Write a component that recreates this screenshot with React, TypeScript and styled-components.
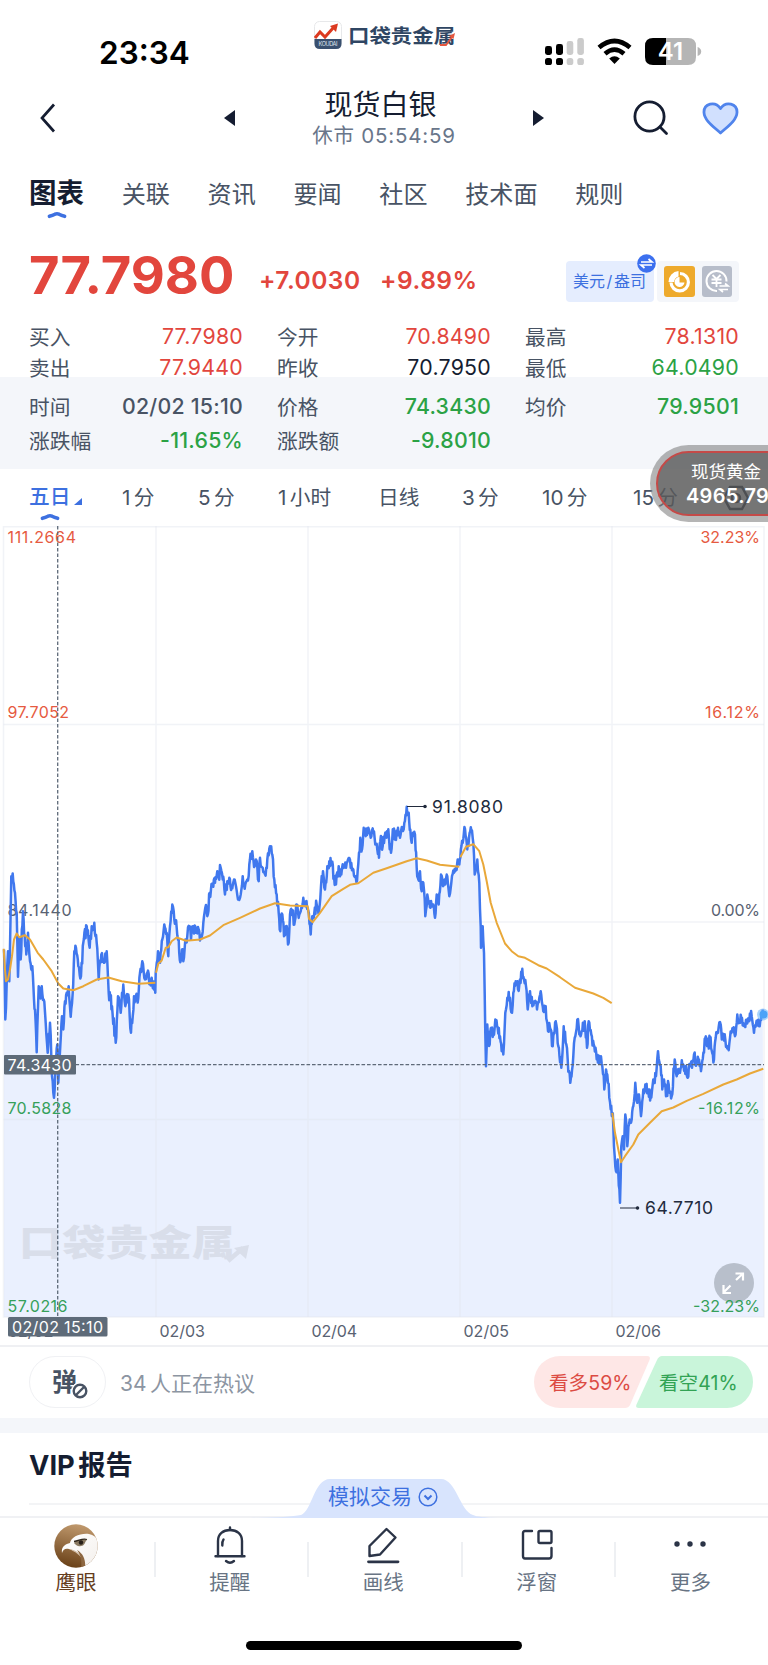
import React from 'react';
import styled, { createGlobalStyle } from 'styled-components';

const GlobalStyle = createGlobalStyle`
  * { box-sizing: border-box; }
  body {
    margin: 0;
    background: #fff;
    font-family: Inter, "Noto Sans CJK SC", sans-serif;
    color: #151d31;
  }
  svg { display: block; flex: none; }
`;

const RED = '#e2463d';
const GREEN = '#2ba245';
const BLUE = '#3d70e0';
const INK = '#151d31';
const SLATE = '#485364';

const Screen = styled.div`
  position: relative;
  width: 768px;
  height: 1665px;
  overflow: hidden;
  background: #fff;
  white-space: nowrap;
`;

/* ---------- status bar ---------- */

const StatusBar = styled.div`
  display: grid;
  grid-template-columns: 314px 1fr 223px;
  height: 82px;
`;

const Clock = styled.div`
  padding: 33px 0 0 99px;
  font-size: 31.5px;
  line-height: 39px;
  font-weight: 600;
  color: #000;
`;

const Brand = styled.div`
  padding-top: 20px;
`;

const StatusIcons = styled.div`
  display: flex;
  gap: 13px;
  padding-top: 38px;
`;

/* ---------- title bar ---------- */

const TitleBar = styled.div`
  display: flex;
  align-items: center;
  height: 80px;
  padding: 0 29px 8px 40px;
`;

const TitleBlock = styled.div`
  width: 298px;
  text-align: center;
`;

const Title = styled.div`
  padding-right: 7px;
  font-size: 28px;
  line-height: 35px;
`;

const SubTitle = styled.div`
  font-size: 20.5px;
  line-height: 25px;
  letter-spacing: 0.8px;
  color: #69768a;
`;

const Spacer = styled.div<{ w: number }>`
  flex: none;
  width: ${(p) => p.w}px;
`;

/* ---------- tabs ---------- */

const Tabs = styled.div`
  display: flex;
  gap: 37.7px;
  height: 66px;
  padding: 14px 0 0 29px;
`;

const Tab = styled.div<{ active?: boolean }>`
  display: flex;
  flex-direction: column;
  align-items: center;
  gap: 1px;
  font-size: ${(p) => (p.active ? 27.5 : 24.1)}px;
  line-height: ${(p) => (p.active ? 34 : 38)}px;
  font-weight: ${(p) => (p.active ? 700 : 400)};
  color: ${(p) => (p.active ? INK : SLATE)};
`;

/* ---------- price ---------- */

const PriceRow = styled.div`
  display: flex;
  align-items: flex-start;
  height: 90px;
  padding: 0 29px;
`;

const Price = styled.div`
  width: 230px;
  padding-top: 16px;
  font-size: 52.5px;
  line-height: 62px;
  font-weight: 700;
  color: ${RED};
`;

const Change = styled.div<{ w: number }>`
  width: ${(p) => p.w}px;
  padding-top: 37px;
  font-size: 24.5px;
  line-height: 30px;
  font-weight: 600;
  letter-spacing: 0.5px;
  color: ${RED};
`;

const Unit = styled.div`
  position: relative;
  width: 88px;
  height: 41px;
  margin: 33px 3px 0 auto;
  padding-left: 7px;
  border-radius: 4px;
  background: #e5edfe;
  font-size: 16px;
  line-height: 41px;
  word-spacing: -2.9px;
  color: ${BLUE};
`;

const UnitBadge = styled.div`
  position: absolute;
  right: -2px;
  top: -7px;
`;

const Markers = styled.div`
  display: flex;
  gap: 7px;
  height: 41px;
  margin-top: 33px;
  padding: 5px 7px;
  border-radius: 4px;
  background: #f4f6fa;
`;

const QuoteGrid = styled.div<{ tinted?: boolean }>`
  display: grid;
  grid-template-columns: repeat(3, 213px);
  column-gap: 35px;
  grid-auto-rows: ${(p) => (p.tinted ? 34 : 30.5)}px;
  height: ${(p) => (p.tinted ? 92 : 59)}px;
  padding: ${(p) => (p.tinted ? '12px' : '3px')} 29px 0;
  background: ${(p) => (p.tinted ? '#f4f6fa' : 'transparent')};
`;

const Quote = styled.div`
  display: flex;
  justify-content: space-between;
  align-items: center;
  font-size: 20.7px;
  color: ${SLATE};
`;

const Value = styled.span<{ color?: string; strong?: boolean }>`
  margin-right: -1px;
  font-size: 21.3px;
  letter-spacing: 0.25px;
  font-weight: ${(p) => (p.strong ? 500 : 400)};
  color: ${(p) => p.color || SLATE};
`;

/* ---------- periods ---------- */

const Periods = styled.div`
  display: flex;
  height: 57px;
  padding: 13px 0 0 29px;
`;

const Period = styled.div<{ w: number; active?: boolean }>`
  flex: none;
  width: ${(p) => p.w}px;
  font-size: 20.7px;
  line-height: 32px;
  word-spacing: -2.5px;
  font-weight: ${(p) => (p.active ? 500 : 400)};
  color: ${(p) => (p.active ? BLUE : SLATE)};
`;

const PeriodLabel = styled.div`
  display: flex;
  align-items: flex-end;
  height: 31px;
  gap: 4px;
`;

const PeriodMark = styled.div`
  padding: 0 0 0 11px;
`;

const FloatQuote = styled.div`
  position: absolute;
  left: 650px;
  top: 445px;
  width: 160px;
  height: 77px;
  padding: 6px;
  border-radius: 39px;
  background: rgba(128, 128, 128, 0.58);
`;

const FloatInner = styled.div`
  height: 65px;
  padding: 9px 0 0 28px;
  border: 2px solid #c44a48;
  border-radius: 33px;
  background: rgba(75, 75, 75, 0.6);
  color: #fff;
`;

const FloatName = styled.div`
  padding-left: 5px;
  font-size: 17.5px;
  line-height: 20px;
`;

const FloatPrice = styled.div`
  font-size: 20px;
  line-height: 28px;
  font-weight: 600;
  letter-spacing: 0.3px;
`;

/* ---------- comments ---------- */

const CommentBar = styled.div`
  display: flex;
  align-items: center;
  height: 73px;
  padding: 0 15px 2px 29px;
  border-top: 2px solid #eff0f3;
`;

const DanmuButton = styled.div`
  position: relative;
  display: flex;
  align-items: center;
  width: 77px;
  height: 52px;
  padding: 0 0 4px 22px;
  border: 1.5px solid #f0f1f4;
  border-radius: 26px;
  font-size: 25px;
  font-weight: 700;
  color: ${SLATE};
`;

const DanmuOff = styled.div`
  position: absolute;
  left: 41px;
  top: 25px;
  border: 1px solid #fff;
  border-radius: 50%;
  background: #fff;
`;

const CommentText = styled.div`
  flex: 1;
  padding-left: 14px;
  font-size: 21px;
  word-spacing: -2.5px;
  color: #8c95a2;
`;

const Votes = styled.div`
  display: grid;
  grid-template-columns: 110px 109px;
  align-items: center;
  width: 219px;
  height: 52px;
`;

const VoteBg = styled.svg`
  grid-area: 1 / 1 / 2 / 3;
`;

const Vote = styled.div<{ col: number; color: string }>`
  grid-area: 1 / ${(p) => p.col} / 2 / ${(p) => p.col + 1};
  padding-left: 15px;
  font-size: 19.5px;
  letter-spacing: 0.1px;
  color: ${(p) => p.color};
`;

const Band = styled.div`
  height: 15px;
  background: #f4f6fa;
`;

const ReportBar = styled.div`
  display: flex;
  flex-direction: column;
  height: 83px;
`;

const ReportTitle = styled.div`
  padding: 14px 0 0 29px;
  height: 45px;
  font-size: 27.3px;
  line-height: 38px;
  font-weight: 700;
  word-spacing: -3px;
`;

const ReportRule = styled.div`
  position: relative;
  height: 26px;
  margin: 25px 0 0 29px;
  border-top: 2px solid #f3f4f6;
`;

const TradeTab = styled.div`
  position: absolute;
  left: 221px;
  top: -27px;
`;

const TradeLabel = styled.div`
  position: absolute;
  left: 78px;
  top: 1px;
  display: flex;
  align-items: center;
  gap: 6px;
  font-size: 21px;
  line-height: 36px;
  color: ${BLUE};
`;

const BottomNav = styled.div`
  display: grid;
  grid-template-columns: repeat(5, 153.6px);
  height: 125px;
  padding-top: 6px;
  border-top: 2px solid #f0f1f4;
`;

const NavItem = styled.div<{ accent?: boolean }>`
  position: relative;
  display: flex;
  flex-direction: column;
  align-items: center;
  padding-right: 1.5px;
  font-size: 20.5px;
  line-height: 30px;
  color: ${(p) => (p.accent ? '#653d1d' : '#687484')};

  & + & {
    background: linear-gradient(#eef0f3, #eef0f3) 0 18px / 2px 35px no-repeat;
  }
`;

const NavIcon = styled.div`
  height: 44px;
`;

const HomeBar = styled.div`
  width: 276px;
  height: 9px;
  margin: 0 auto;
  border-radius: 5px;
  background: #000;
`;

/* ---------- chart data ---------- */

type Pt = [number, number];

// Flat x,y list in thirds of a pixel, measured from a given left edge.
const trace = (left: number, flat: number[]): Pt[] => {
  const out: Pt[] = [];
  for (let i = 0; i < flat.length; i += 2) {
    out.push([left + flat[i] / 3, 253.5 + flat[i + 1] / 3]);
  }
  return out;
};

const PRICES: Pt[] = [
  ...trace(0, [
    12, 510, 16, 720, 24, 515, 28, 605, 34, 290, 38, 282, 45, 340, 50, 400, 54, 592, 58, 475, 62, 540,
    69, 395, 74, 470, 79, 525, 84, 460, 90, 545, 97, 560, 102, 660, 105, 690, 110, 818, 116, 620, 120, 650,
    125, 620, 131, 660, 137, 730, 143, 820, 150, 730, 156, 890, 162, 955, 166, 870, 172, 795, 175, 910,
    181, 800, 186, 710, 190, 750, 195, 665, 200, 640, 206, 620, 212, 712, 218, 640, 223, 515, 228, 505,
    235, 560, 243, 590, 250, 490, 260, 440, 269, 505, 275, 440, 283, 430, 290, 490, 296, 600, 304, 525,
    312, 550, 320, 515, 326, 640, 336, 680, 347, 790, 354, 650, 362, 700, 370, 615, 376, 680, 385, 645,
    393, 760, 402, 650, 415, 655, 420, 580, 427, 545, 435, 600, 442, 580, 450, 600, 455, 595, 466, 640,
    467, 580, 474, 515, 480, 550, 487, 480, 493, 435, 500, 460, 505, 530, 510, 440, 517, 375, 523, 420,
    530, 445, 536, 480, 541, 548, 546, 510, 550, 545, 556, 480, 562, 470, 568, 445, 573, 480, 580, 440,
    588, 460, 596, 450, 604, 478, 610, 430, 616, 385, 622, 410, 629, 340, 638, 320, 645, 310, 652, 275,
    656, 290, 662, 265, 668, 300, 675, 345, 682, 305, 688, 295, 695, 320, 702, 300, 708, 320, 714, 360,
    722, 345, 728, 290, 736, 315, 742, 300, 748, 255, 757, 215, 764, 255, 768, 240, 776, 305,
  ]),
  ...trace(240, [
    60, 235, 68, 265, 75, 285, 82, 240, 90, 200, 97, 225, 103, 300, 110, 345, 116, 400, 119, 450, 127, 405,
    132, 470, 138, 440, 146, 490, 150, 405, 157, 400, 163, 435, 170, 375, 178, 405, 184, 385, 190, 355,
    196, 380, 203, 385, 205, 395, 212, 465, 217, 410, 223, 400, 230, 375, 237, 395, 243, 320, 249, 275,
    255, 330, 262, 260, 268, 245, 275, 250, 282, 290, 288, 315, 296, 260, 304, 285, 312, 260, 318, 265,
    324, 240, 332, 265, 340, 270, 346, 290, 351, 305, 357, 220, 361, 175, 366, 210, 371, 145, 377, 170,
    385, 145, 392, 175, 400, 160, 406, 195, 412, 210, 417, 235, 421, 185, 428, 200, 434, 170, 441, 155,
    447, 175, 453, 220, 460, 150, 466, 180, 474, 145, 480, 175, 487, 145, 493, 130, 500, 82, 506, 100,
    511, 150, 515, 190, 519, 160, 525, 165, 530, 265, 535, 300, 540, 275, 545, 335, 550, 310, 556, 410,
    562, 345, 568, 365, 575, 380, 580, 375, 585, 415, 590, 345, 596, 375, 603, 285, 609, 320, 614, 300,
    622, 290, 628, 350, 634, 310, 642, 280, 648, 265, 653, 240, 658, 255, 661, 235, 668, 190, 675, 148,
    682, 210, 687, 175, 694, 152, 700, 190, 704, 285, 712, 240, 718, 310, 722, 440, 723, 505, 728, 440,
    732, 520, 738, 860,
  ]),
  ...trace(450, [
    112, 735, 119, 795, 124, 745, 130, 765, 136, 720, 143, 745, 150, 770, 160, 825, 166, 700, 172, 655,
    180, 655, 186, 700, 190, 640, 197, 605, 204, 630, 210, 600, 217, 568, 222, 600, 228, 620, 233, 690,
    240, 635, 247, 680, 254, 665, 261, 690, 272, 635, 278, 680, 287, 680, 294, 755, 300, 745, 308, 800,
    317, 725, 325, 800, 334, 865, 341, 740, 347, 790, 353, 840, 361, 910, 370, 830, 376, 770, 382, 720,
    388, 765, 395, 755, 404, 725, 411, 805, 416, 725, 424, 765, 433, 800, 440, 840, 449, 830, 457, 860,
    463, 930, 468, 870, 474, 910, 482, 990, 487, 1000, 490, 1040, 494, 1130, 498, 1175, 503, 1140,
    510, 1270, 514, 1100, 518, 1070, 522, 1110, 526, 1005, 532, 1100, 537, 1035, 545, 1020, 550, 980,
    556, 910, 562, 970, 567, 945, 573, 1010, 580, 930, 588, 915, 595, 930, 602, 950, 610, 900, 618, 890,
    624, 815, 632, 860, 637, 930, 642, 900, 648, 950, 656, 915, 665, 950, 674, 840, 680, 890, 690, 880,
    697, 855, 704, 865, 713, 895, 720, 860, 726, 865, 732, 825, 740, 850, 747, 840, 753, 875, 762, 820,
    766, 775, 773, 800, 780, 780, 792, 840, 797, 775, 804, 760, 812, 735, 817, 775, 826, 780, 834, 805,
    840, 775, 849, 750, 855, 770, 862, 705, 870, 730, 876, 715, 884, 735, 890, 720, 898, 725, 905, 710,
    912, 760, 918, 735, 927, 740, 935, 700, 938, 690,
  ]),
];

const AVERAGES: Pt[][] = [
  trace(0, [
    11, 508, 14, 560, 18, 605, 24, 600, 30, 570, 36, 530, 42, 480, 50, 462, 58, 473, 75, 467, 90, 480,
    113, 520, 130, 540, 155, 575, 175, 612, 190, 627, 220, 632, 250, 620, 290, 600, 325, 594, 365, 605,
    415, 613, 466, 610,
  ]),
  trace(0, [
    468, 580, 475, 553, 485, 543, 497, 505, 505, 503, 515, 485, 530, 474, 558, 484, 600, 480, 630, 468,
    670, 437, 720, 415, 780, 387, 825, 371, 870, 378, 923, 380, 927, 418, 938, 428, 960, 400, 995, 350,
    1030, 328, 1050, 316, 1075, 311, 1120, 280, 1160, 266, 1220, 245, 1250, 236, 1280, 243, 1320, 256,
    1378, 262,
  ]),
  trace(450, [
    31, 233, 48, 202, 70, 194, 88, 215, 100, 255, 110, 305, 122, 370, 140, 430, 165, 492, 185, 515,
    205, 530, 225, 535, 265, 557, 290, 567, 330, 593, 375, 625, 430, 642, 460, 655, 485, 671,
  ]),
  trace(450, [
    487, 1000, 495, 1060, 505, 1110, 513, 1148, 525, 1130, 550, 1095, 565, 1065, 600, 1030, 635, 995,
    670, 984, 710, 964, 760, 943, 820, 915, 860, 900, 900, 882, 940, 868,
  ]),
];

const withTicks = (pts: Pt[]): Pt[] => {
  const out: Pt[] = [pts[0]];
  let seed = 7;
  for (let i = 1; i < pts.length; i++) {
    const [x0, y0] = pts[i - 1];
    const [x1, y1] = pts[i];
    const n = Math.max(1, Math.round((x1 - x0) / 0.6));
    for (let k = 1; k < n; k++) {
      seed = (seed * 16807) % 2147483647;
      const wobble = (seed / 2147483647 - 0.5) * 13;
      out.push([x0 + ((x1 - x0) * k) / n, y0 + ((y1 - y0) * k) / n + wobble]);
    }
    out.push([x1, y1]);
  }
  return out;
};

const toPath = (pts: Pt[]) => 'M' + pts.map(([x, y]) => `${x.toFixed(1)} ${y.toFixed(1)}`).join('L');

const pricePath = toPath(withTicks(PRICES));

// label, baseline, colour, drawn width
const LEFT_AXIS: [string, number, string, number][] = [
  ['111.2664', 17, '#e65a41', 68.5],
  ['97.7052', 192, '#e65a41', 61.5],
  ['84.1440', 390, '#596272', 64],
  ['70.5828', 587.5, '#36a05a', 64],
  ['57.0216', 785.5, '#36a05a', 60],
];

const RIGHT_AXIS: [string, number, string, number][] = [
  ['32.23%', 17, '#e65a41', 59.5],
  ['16.12%', 192, '#e65a41', 55],
  ['0.00%', 390, '#596272', 49],
  ['-16.12%', 587.5, '#36a05a', 62],
  ['-32.23%', 785.5, '#36a05a', 67],
];

const Plot = styled.svg`
  font-family: Inter, "Noto Sans CJK SC", sans-serif;
  font-size: 16px;
`;

const Chart = () => (
  <Plot width="768" height="819" viewBox="0 0 768 819">
    <path d={`${pricePath}L764 791L4 791Z`} fill="#eaf0fe" />
    <g stroke="#dfe4ee" strokeOpacity="0.45" strokeWidth="1.5" fill="none">
      <path d="M3.5 0.8H764V791H3.5Z" />
      <path d="M3.5 198.5H764M3.5 396H764M3.5 593.5H764M156 0V791M308 0V791M460 0V791M612 0V791" />
    </g>
    <g transform="translate(19 730) scale(1.2 1)">
      <text fontSize="36" fontWeight="900" fill="#d9deea">口袋贵金属</text>
    </g>
    <path d="M228 735L243 722" fill="none" stroke="#d9deea" strokeWidth="4.5" />
    <path d="M234 722L249 719L246 733Z" fill="#d9deea" />
    {LEFT_AXIS.map(([t, y, c, w]) => (
      <text key={t} x="7.5" y={y} fill={c} textLength={w}>{t}</text>
    ))}
    {RIGHT_AXIS.slice(0, 4).map(([t, y, c, w]) => (
      <text key={t} x={760 - w} y={y} fill={c} textLength={w}>{t}</text>
    ))}
    <path d={pricePath} fill="none" stroke="#4078ee" strokeWidth="2.5" strokeLinejoin="round" />
    {AVERAGES.map((a, i) => (
      <path key={i} d={toPath(a)} fill="none" stroke="#e9a839" strokeWidth="2" strokeLinejoin="round" />
    ))}
    <circle cx="763" cy="488.5" r="6" fill="#64b0fa" fillOpacity="0.55" />
    <circle cx="763.5" cy="488.5" r="4" fill="#4ba3f8" />
    <path d="M57.7 0V791M4 538.7H764" stroke="#5f6a79" strokeWidth="1.3" strokeDasharray="3.6 1.9" />
    <rect x="4" y="529" width="72" height="19.5" rx="1" fill="#5e6b79" />
    <text x="7.5" y="544.6" fill="#fff" textLength="64">74.3430</text>
    <g stroke="#222b3d" strokeWidth="1.2" fill="#222b3d">
      <path d="M407 280.5H424M620 682H637" />
      <circle cx="425" cy="280.5" r="1.2" />
      <circle cx="637.5" cy="682" r="1.2" />
    </g>
    <g fontSize="17.5" fill="#222b3d">
      <text x="432" y="287" textLength="71">91.8080</text>
      <text x="645" y="688.3" textLength="68">64.7710</text>
    </g>
    <circle cx="734" cy="757" r="20" fill="#b8bfcb" />
    <path
      d="M736 754L742.5 748M735.5 747.5H743V754.5M730.5 759.5L724 766M723.5 759V767H731"
      fill="none"
      stroke="#fff"
      strokeWidth="2.2"
    />
    {RIGHT_AXIS.slice(4).map(([t, y, c, w]) => (
      <text key={t} x={760 - w} y={y} fill={c} textLength={w}>{t}</text>
    ))}
    <g fill="#596272">
      <text x="8" y="811">02/02</text>
      {['02/03', '02/04', '02/05', '02/06'].map((d, i) => (
        <text key={d} x={159.5 + i * 152} y="811.2" textLength="45.5">{d}</text>
      ))}
    </g>
    <rect x="8" y="791" width="99.5" height="19.5" rx="1.5" fill="#5e6b79" />
    <text x="12" y="806.5" fill="#fff" textLength="91">02/02 15:10</text>
  </Plot>
);

/* ---------- small pieces ---------- */

const ActiveMark = () => (
  <svg width="20" height="8" viewBox="0 0 20 8">
    <path d="M2.4 5.3Q5.5 4.6 8 3.2Q10 2.2 12 3.2Q14.500 4.6 17.6 5.3" fill="none" stroke={BLUE} strokeWidth="3.6" strokeLinecap="round" />
  </svg>
);

const BrandLogo = () => (
  <svg width="150" height="32" viewBox="0 0 150 32" fontFamily='Inter, "Noto Sans CJK SC", sans-serif'>
    <rect x="0.5" y="1.5" width="27" height="27" rx="5" fill="#fff" stroke="#e7e8ea" />
    <path d="M0.5 19H27.5V23.5Q27.5 29 22 29H6Q0.5 29 0.5 23.5Z" fill="#39506f" />
    <path d="M1 18L6 12L11 17L20 7" fill="none" stroke="#dc3a20" strokeWidth="3" />
    <path d="M16 6L24 3.5L22 12Z" fill="#dc3a20" />
    <text x="4.5" y="26" fontSize="5.6" fill="#dfe5ee" textLength="19">KOUDAI</text>
    <g transform="translate(34 23.4) scale(1.1 1)">
      <text fontSize="19.5" fontWeight="700" fill="#2f4663">口袋贵金属</text>
    </g>
    <path d="M126 25H132L138 17" fill="none" stroke="#e4573f" strokeWidth="1.8" />
    <path d="M135 16L141 13L139.500 19Z" fill="#e4573f" />
  </svg>
);

const Signal = () => (
  <svg width="39" height="27" viewBox="0 0 39 27">
    <g fill="#000">
      <rect x="0" y="8" width="7" height="9" rx="2.4" />
      <rect x="11" y="6" width="7" height="11" rx="2.4" />
      <rect x="0" y="20" width="7" height="7" rx="2.6" />
      <rect x="11" y="20" width="7" height="7" rx="2.6" />
    </g>
    <g fill="#cbcbcb">
      <rect x="21.7" y="3" width="6.6" height="14" rx="2.4" />
      <rect x="32.3" y="0" width="6.6" height="17" rx="2.4" />
      <rect x="21.7" y="20" width="6.6" height="7" rx="2.6" />
      <rect x="32.3" y="20" width="6.6" height="7" rx="2.6" />
    </g>
  </svg>
);

const Wifi = () => (
  <svg width="35" height="27" viewBox="0 0 35 27">
    <g fill="none" stroke="#000" strokeWidth="4.6">
      <path d="M2 9.6Q17.5 -3.6 33 9.6" />
      <path d="M8 15.7Q17.5 7.6 27 15.7" />
    </g>
    <path d="M12.2 20.5Q17.5 16 22.8 20.5L17.5 26Z" />
  </svg>
);

const Battery = () => (
  <svg width="58" height="27" viewBox="0 0 58 27">
    <path d="M8 0H21V27H8Q0 27 0 19V8Q0 0 8 0Z" fill="#000" />
    <path d="M21 0H43Q51 0 51 8V19Q51 27 43 27H21Z" fill="#b5b5b5" />
    <path d="M52.6 9Q56.2 10.5 56.2 13.5Q56.2 16.5 52.6 18Z" fill="#b5b5b5" />
    <text x="25.5" y="22" fontFamily="Inter, sans-serif" fontSize="24" fontWeight="600" fill="#fff" textAnchor="middle">41</text>
  </svg>
);

const Eagle = () => (
  <svg width="44" height="44" viewBox="0 0 44 44">
    <defs>
      <linearGradient id="coin" x1="0.6" y1="0" x2="0.4" y2="1">
        <stop offset="0" stopColor="#c19a6e" />
        <stop offset="1" stopColor="#694017" />
      </linearGradient>
      <linearGradient id="feather" x1="0" y1="0" x2="1" y2="1">
        <stop offset="0" stopColor="#fff" />
        <stop offset="1" stopColor="#f3efeb" />
      </linearGradient>
      <clipPath id="disc"><circle cx="22" cy="22" r="21.7" /></clipPath>
    </defs>
    <g clipPath="url(#disc)">
      <rect width="44" height="44" fill="url(#coin)" />
      <path d="M8 29C7 23 11 20 16 19C17 13 26 9 35 10C41 11 44 15 45 20V42L31 45C32 34 24 27 15 25C12 24 9 25 8 29Z" fill="url(#feather)" />
      <path d="M15 25C23 26 29 31 30 38C26 30 21 28 15 25Z" fill="#d6c1aa" />
      <path d="M23 26C30 30 32 37 31 45H27C28 37 27 31 23 26Z" fill="#8d6740" />
      <path d="M20 19C23 15.5 28 15 33 16C31 17 31 22 27 22C24 23 22 21 20 19Z" fill="#8a7a62" />
      <circle cx="27" cy="18.5" r="2.2" fill="#271f18" />
      <path d="M20 17.5C25 17 28 14 33 15.5" fill="none" stroke="#2f261c" strokeWidth="1.3" />
    </g>
  </svg>
);

const NAV_STROKE = {
  fill: 'none',
  stroke: '#2b3447',
  strokeWidth: 2.4,
  strokeLinejoin: 'round' as const,
  strokeLinecap: 'round' as const,
};

const Bell = () => (
  <svg width="32" height="44" viewBox="0 0 32 44" {...NAV_STROKE}>
    <path d="M4 32V17C4 10 9 6 16 6S28 10 28 17V32" />
    <path d="M1.5 32.3H30.5M16 3.5V6M9.5 15.5Q8 17.500 8.3 21.5M12 37Q16 40.5 20 37" />
  </svg>
);

const Pen = () => (
  <svg width="34" height="44" viewBox="0 0 34 44" {...NAV_STROKE}>
    <path d="M20.5 5L29.5 13.5L14 30.5L3.5 32V22Z" />
    <path d="M2.5 37.8H32" strokeWidth="2.8" />
  </svg>
);

const Windows = () => (
  <svg width="32" height="44" viewBox="0 0 32 44" {...NAV_STROKE}>
    <path d="M11 7H4Q2 7 2 9V32Q2 34.5 4 34.5H28Q30.5 34.5 30.5 32V24" />
    <rect x="17.5" y="7" width="13" height="12" rx="1.5" />
  </svg>
);

const Dots = () => (
  <svg width="36" height="44" viewBox="0 0 36 44" fill="#2b3447">
    <circle cx="5" cy="20" r="2.7" />
    <circle cx="18" cy="20" r="2.7" />
    <circle cx="31" cy="20" r="2.7" />
  </svg>
);

const TABS = ['图表', '关联', '资讯', '要闻', '社区', '技术面', '规则'];

const QUOTES: [string, string, string][] = [
  ['买入', '77.7980', RED],
  ['今开', '70.8490', RED],
  ['最高', '78.1310', RED],
  ['卖出', '77.9440', RED],
  ['昨收', '70.7950', INK],
  ['最低', '64.0490', GREEN],
];

const CURSOR_QUOTES: [string, string, string][] = [
  ['时间', '02/02 15:10', SLATE],
  ['价格', '74.3430', GREEN],
  ['均价', '79.9501', GREEN],
  ['涨跌幅', '-11.65%', GREEN],
  ['涨跌额', '-9.8010', GREEN],
];

const PERIODS: [string, number][] = [
  ['1 分', 76],
  ['5 分', 80],
  ['1 小时', 100],
  ['日线', 84],
  ['3 分', 80],
  ['10 分', 91],
  ['15 分', 90],
];

const App = () => (
  <>
    <GlobalStyle />
    <Screen>
      <StatusBar>
        <Clock>23:34</Clock>
        <Brand><BrandLogo /></Brand>
        <StatusIcons>
          <Signal />
          <Wifi />
          <Battery />
        </StatusIcons>
      </StatusBar>

      <TitleBar>
        <svg width="16" height="30" viewBox="0 0 16 30">
          <path d="M14 1.5L2 15L14 28.5" fill="none" stroke={INK} strokeWidth="2.7" />
        </svg>
        <Spacer w={168} />
        <svg width="11" height="16" viewBox="0 0 11 16"><path d="M11 0V16L0 8Z" fill={INK} /></svg>
        <TitleBlock>
          <Title>现货白银</Title>
          <SubTitle>休市 05:54:59</SubTitle>
        </TitleBlock>
        <svg width="11" height="16" viewBox="0 0 11 16"><path d="M0 0V16L11 8Z" fill={INK} /></svg>
        <Spacer w={89} />
        <svg width="36" height="36" viewBox="0 0 36 36" fill="none" stroke={INK} strokeWidth="2.8" strokeLinecap="round">
          <circle cx="16.5" cy="16.5" r="14.6" />
          <path d="M27 27L33.5 33.5" />
        </svg>
        <Spacer w={33} />
        <svg width="37" height="34" viewBox="0 0 37 34">
          <path
            d="M18.5 32C12 26 2.3 19.5 2 11.5C1.700 2.500 13 -0.500 18.5 7.500C24 -0.500 35.300 2.500 35 11.500C34.700 19.500 25 26 18.500 32Z"
            fill="#d1e0fe"
            stroke="#5084ec"
            strokeWidth="2.8"
            strokeLinejoin="round"
          />
        </svg>
      </TitleBar>

      <Tabs>
        {TABS.map((t, i) => (
          <Tab key={t} active={i === 0}>
            {t}
            {i === 0 && <ActiveMark />}
          </Tab>
        ))}
      </Tabs>

      <PriceRow>
        <Price>77.7980</Price>
        <Change w={121}>+7.0030</Change>
        <Change w={100}>+9.89%</Change>
        <Unit>
          美元 / 盎司
          <UnitBadge>
            <svg width="19" height="19" viewBox="0 0 19 19">
              <circle cx="9.5" cy="9.5" r="9.3" fill="#3c70ef" />
              <path d="M4 8H15L11.5 5M15 11H4L7.5 14" fill="none" stroke="#fff" strokeWidth="1.7" />
            </svg>
          </UnitBadge>
        </Unit>
        <Markers>
          <svg width="31" height="31" viewBox="0 0 31 31">
            <rect width="31" height="31" rx="3" fill="#eeaa2c" />
            <path d="M16 7.5A8.7 8.7 0 1 1 7 16.5" fill="none" stroke="#fff" strokeWidth="3.2" />
            <path d="M14.5 5V10.500Q10.500 11.500 10 16H4.500A11 11 0 0 1 14.500 5Z" fill="#fff" />
            <path d="M15.500 11V16.500H20.500A5 5 0 1 1 15.500 11Z" fill="#fff" />
          </svg>
          <svg width="30" height="31" viewBox="0 0 30 31" fill="none" stroke="#fff" strokeWidth="2">
            <rect width="30" height="31" rx="3" fill="#b7bdca" stroke="none" />
            <path d="M15 25A10 10 0 1 1 24.5 15.5" />
            <path d="M10.5 9L14.5 13L18.5 9M9.5 13.5H19.5M9.5 17H19.5M14.5 13V21" strokeWidth="1.8" />
            <path d="M17.5 20H26L23 17.5M26 23.5H18L21 26" strokeWidth="1.7" />
          </svg>
        </Markers>
      </PriceRow>

      <QuoteGrid>
        {QUOTES.map(([name, value, color]) => (
          <Quote key={name}>
            {name}
            <Value color={color}>{value}</Value>
          </Quote>
        ))}
      </QuoteGrid>
      <QuoteGrid tinted>
        {CURSOR_QUOTES.map(([name, value, color]) => (
          <Quote key={name}>
            {name}
            <Value color={color} strong>{value}</Value>
          </Quote>
        ))}
      </QuoteGrid>

      <Periods>
        <Period w={93} active>
          <PeriodLabel>
            五日
            <svg width="8" height="15" viewBox="0 0 8 15"><path d="M8 0V7H0Z" fill={BLUE} /></svg>
          </PeriodLabel>
          <PeriodMark><ActiveMark /></PeriodMark>
        </Period>
        {PERIODS.map(([name, w]) => (
          <Period key={name} w={w}>{name}</Period>
        ))}
        <svg width="26" height="32" viewBox="0 0 26 32" fill="none" stroke={INK} strokeWidth="2.5">
          <path d="M7 5H19L25 16L19 27H7L1 16Z" />
          <circle cx="13" cy="16" r="4" />
        </svg>
      </Periods>

      <Chart />

      <CommentBar>
        <DanmuButton>
          弹
          <DanmuOff>
            <svg width="16" height="16" viewBox="0 0 16 16" fill="none" stroke={SLATE} strokeWidth="2.4">
              <circle cx="8" cy="8" r="6.3" />
              <path d="M4 12L12 4" />
            </svg>
          </DanmuOff>
        </DanmuButton>
        <CommentText>34 人正在热议</CommentText>
        <Votes>
          <VoteBg width="219" height="52" viewBox="0 0 219 52">
            <path d="M26 0H113Q117 0 115.5 4L96 49Q94.5 52 91 52H26A26 26 0 0 1 26 0Z" fill="#fee7e6" />
            <path d="M128 0H193A26 26 0 0 1 193 52H105Q101 52 102.5 48.5L123 4Q125 0 128 0Z" fill="#c9f5da" />
          </VoteBg>
          <Vote col={1} color="#dc4b43">看多59%</Vote>
          <Vote col={2} color="#32a354">看空41%</Vote>
        </Votes>
      </CommentBar>
      <Band />

      <ReportBar>
        <ReportTitle>VIP 报告</ReportTitle>
        <ReportRule>
          <TradeTab>
            <svg width="270" height="40" viewBox="0 0 270 40">
              <path d="M20 40Q60 39.5 73 37C84 33 86 1 102 1H213C228 1 232 33 245 37Q250 39.500 270 40Z" fill="#d8e4fd" transform="translate(-22 0)" />
            </svg>
            <TradeLabel>
              模拟交易
              <svg width="20" height="20" viewBox="0 0 20 20" fill="none" stroke={BLUE} strokeWidth="1.5">
                <circle cx="10" cy="10" r="8.8" />
                <path d="M6.5 8.5L10 12L13.5 8.5" strokeWidth="2" />
              </svg>
            </TradeLabel>
          </TradeTab>
        </ReportRule>
      </ReportBar>

      <BottomNav>
        <NavItem accent><NavIcon><Eagle /></NavIcon>鹰眼</NavItem>
        <NavItem><NavIcon><Bell /></NavIcon>提醒</NavItem>
        <NavItem><NavIcon><Pen /></NavIcon>画线</NavItem>
        <NavItem><NavIcon><Windows /></NavIcon>浮窗</NavItem>
        <NavItem><NavIcon><Dots /></NavIcon>更多</NavItem>
      </BottomNav>
      <HomeBar />

      <FloatQuote>
        <FloatInner>
          <FloatName>现货黄金</FloatName>
          <FloatPrice>4965.79</FloatPrice>
        </FloatInner>
      </FloatQuote>
    </Screen>
  </>
);

export default App;
